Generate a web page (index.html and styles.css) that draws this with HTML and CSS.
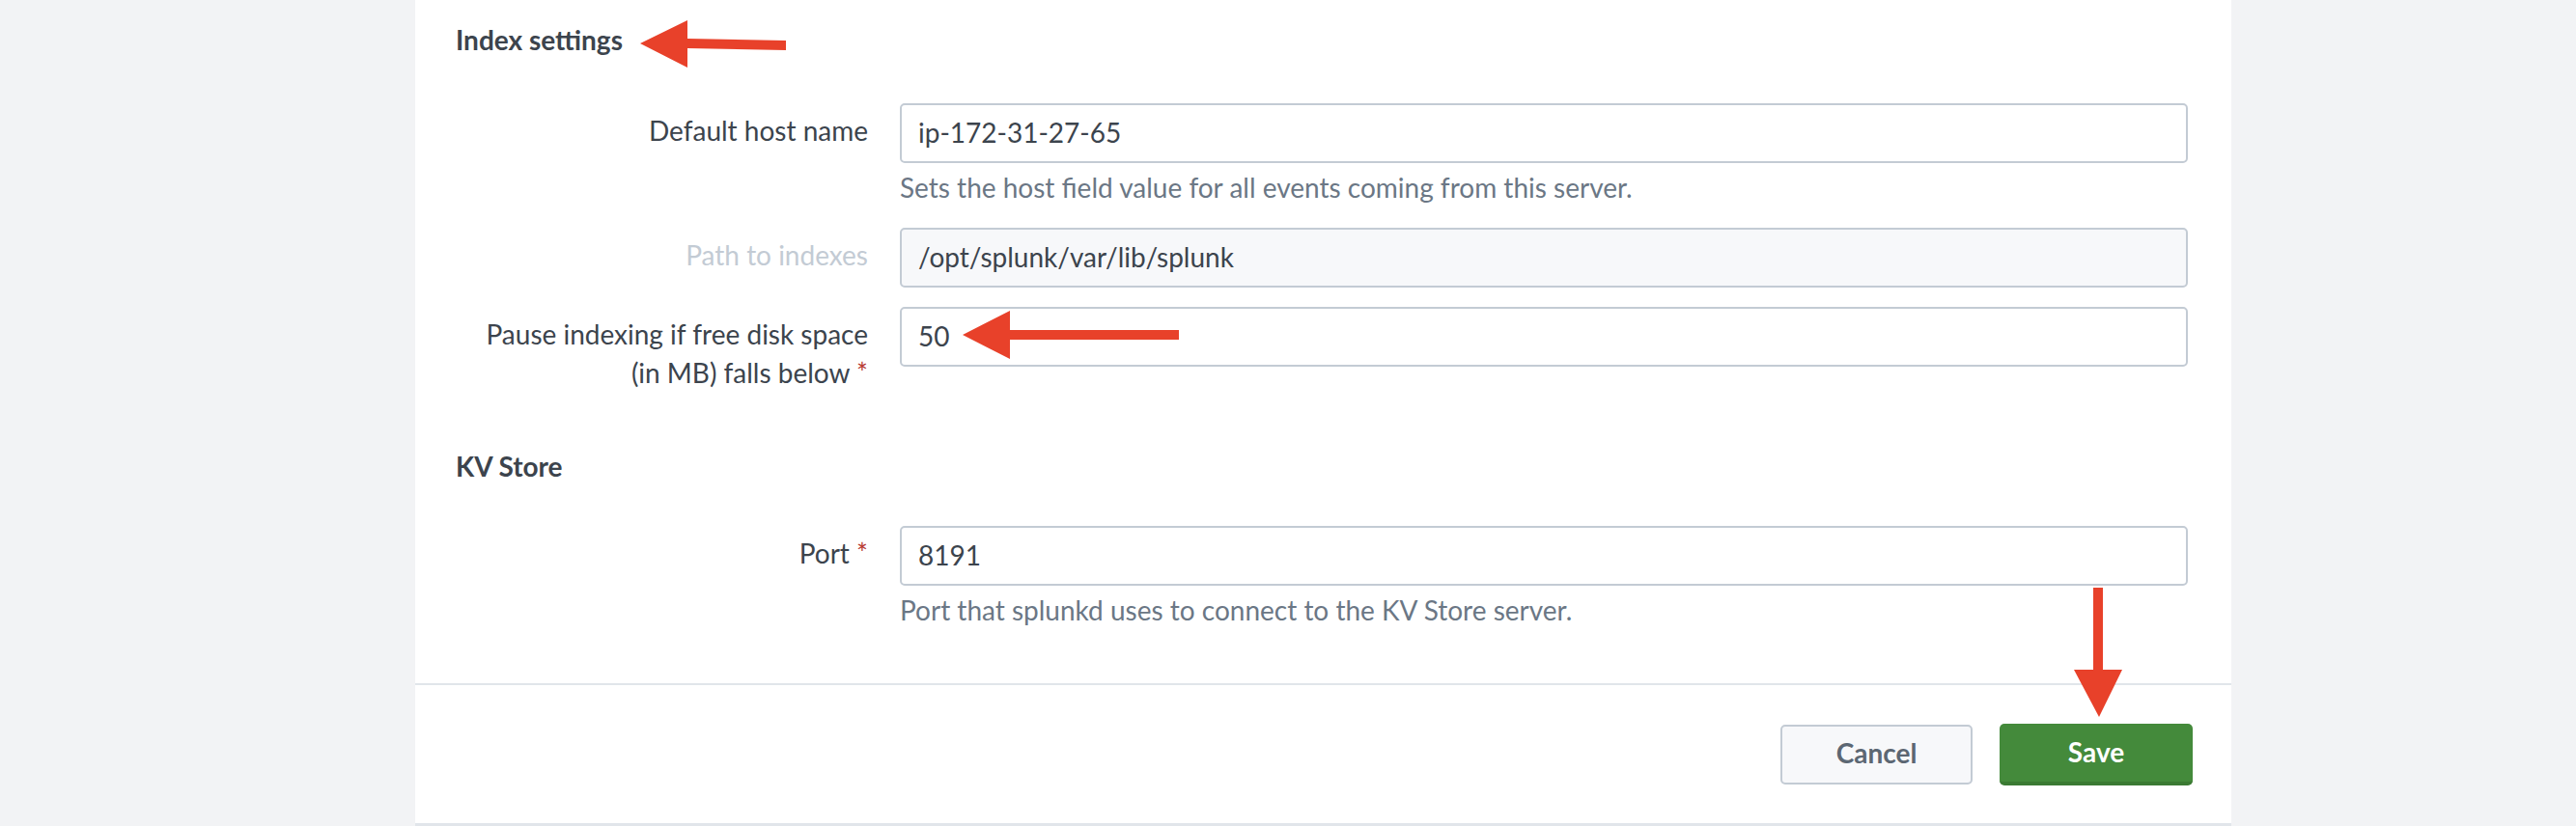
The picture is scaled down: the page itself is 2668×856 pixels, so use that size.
FILE: index.html
```html
<!DOCTYPE html>
<html lang="en">
<head>
<meta charset="utf-8">
<title>Server settings</title>
<link rel="stylesheet" href="styles.css">
</head>
<body>
<div class="page">
  <div class="panel">
    <div class="content">
      <h2 class="section-title first">Index settings</h2>

      <div class="row row-host">
        <label class="label">Default host name</label>
        <div class="control">
          <input class="field" type="text" value="ip-172-31-27-65">
          <div class="help">Sets the host field value for all events coming from this server.</div>
        </div>
      </div>

      <div class="row row-path">
        <label class="label disabled">Path to indexes</label>
        <div class="control">
          <input class="field" type="text" value="/opt/splunk/var/lib/splunk" disabled>
        </div>
      </div>

      <div class="row row-pause">
        <label class="label">Pause indexing if free disk space<br>(in MB) falls below <span class="req">*</span></label>
        <div class="control">
          <input class="field" type="text" value="50">
        </div>
      </div>

      <h2 class="section-title second">KV Store</h2>

      <div class="row row-port">
        <label class="label">Port <span class="req">*</span></label>
        <div class="control">
          <input class="field" type="text" value="8191">
          <div class="help">Port that splunkd uses to connect to the KV Store server.</div>
        </div>
      </div>
    </div>

    <div class="footer">
      <button class="btn btn-cancel" type="button">Cancel</button>
      <button class="btn btn-save" type="button">Save</button>
    </div>
  </div>

  <svg class="annotations" width="2668" height="856" viewBox="0 0 2668 856" aria-hidden="true">
    <polygon points="663,45 712,21 712,40 814,42 814,52 712,50 712,70"/>
    <polygon points="997,347 1046,322 1046,342 1221,342 1221,352 1046,352 1046,372"/>
    <polygon points="2168,609 2178,609 2178,694 2198,694 2174,743 2148,694 2168,694"/>
  </svg>
</div>
</body>
</html>
```

FILE: styles.css
```css
html, body {
  margin: 0;
  padding: 0;
}

body {
  background: #f2f3f5;
  font-family: Lato, "Liberation Sans", sans-serif;
  color: #3c444d;
}

.page {
  position: relative;
  width: 2668px;
  height: 856px;
  overflow: hidden;
}

.panel {
  margin-left: 430px;
  width: 1881px;
  height: 853px;
  background: #ffffff;
  border-bottom: 3px solid #e1e5ea;
  display: flex;
  flex-direction: column;
}

.content {
  padding: 21px 45px 0 42px;
  height: 710px;
  border-bottom: 2px solid #e1e5ea;
  box-sizing: border-box;
  flex: none;
}

.section-title {
  margin: 0;
  font-size: 28px;
  line-height: 40px;
  font-weight: 700;
  color: #3c444d;
}

.section-title.second {
  margin-top: 57px;
}

.row {
  display: flex;
  align-items: flex-start;
  gap: 33px;
}

.row-host { margin-top: 46px; }
.row-path { margin-top: 24px; }
.row-pause { margin-top: 20px; }
.row-port { margin-top: 42px; }

.label {
  width: 427px;
  flex: none;
  text-align: right;
  font-size: 28px;
  line-height: 40px;
  padding-top: 8px;
  color: #3c444d;
}

.label.disabled {
  color: #c3cbd4;
}

.req {
  color: #b83a31;
  font-size: 28px;
  font-weight: 400;
  vertical-align: 0;
}

.control {
  flex: 1;
  display: flex;
  flex-direction: column;
}

.field {
  box-sizing: border-box;
  width: 100%;
  height: 62px;
  margin: 0;
  padding: 0 17px 3px;
  border: 2px solid #c3cbd4;
  border-radius: 5px;
  background: #ffffff;
  font-family: Lato, "Liberation Sans", sans-serif;
  font-size: 28px;
  color: #3c444d;
  outline: none;
}

.field:disabled {
  background: #f7f8fa;
  color: #3c444d;
  -webkit-text-fill-color: #3c444d;
  opacity: 1;
}

.help {
  margin-top: 7px;
  font-size: 28px;
  line-height: 36px;
  color: #6b7785;
}

.footer {
  display: flex;
  justify-content: flex-end;
  align-items: flex-start;
  gap: 28px;
  padding: 40px 40px 0 0;
}

.btn {
  box-sizing: border-box;
  border-radius: 5px;
  font-family: Lato, "Liberation Sans", sans-serif;
  font-size: 28px;
  font-weight: 700;
  cursor: pointer;
  margin: 0;
}

.btn-cancel {
  width: 199px;
  margin-top: 1px;
  height: 62px;
  background: #f7f8fa;
  border: 2px solid #c3cbd4;
  color: #5c6773;
  padding: 0 0 5px;
}

.btn-save {
  width: 200px;
  height: 64px;
  background: #448a3b;
  border: none;
  border-bottom: 4px solid #3b7a33;
  color: #ffffff;
  padding: 0 0 2px;
}

.annotations {
  position: absolute;
  left: 0;
  top: 0;
  pointer-events: none;
  fill: #e8412a;
}
```
